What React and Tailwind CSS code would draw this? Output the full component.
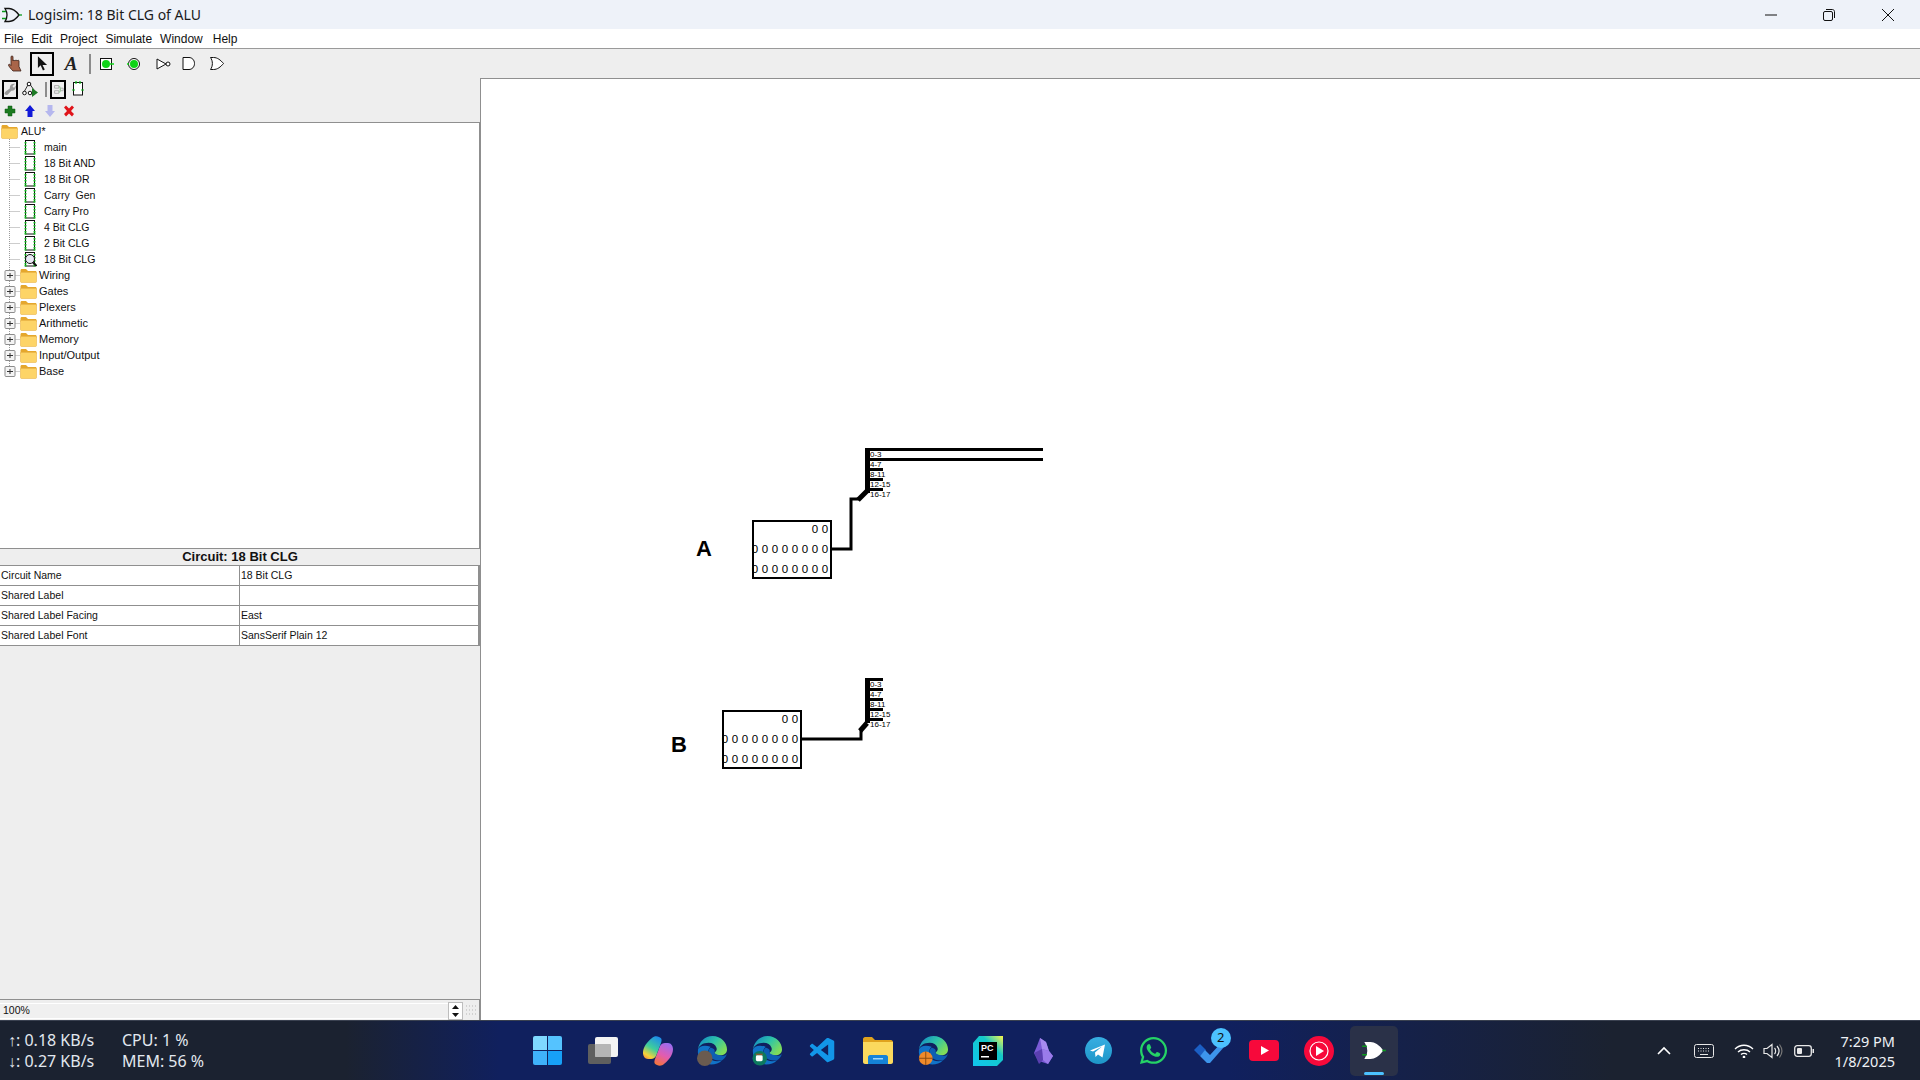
import { FaWhatsapp } from "react-icons/fa6";
import { VscVscode } from "react-icons/vsc";

const UI_FONT = "font-['Noto_Sans','Open_Sans',sans-serif]";
const TREE_FONT = "font-['Liberation_Sans',Arial,sans-serif]";

const circuits = ["main", "18 Bit AND", "18 Bit OR", "Carry  Gen", "Carry Pro", "4 Bit CLG", "2 Bit CLG", "18 Bit CLG"];
const libraries = ["Wiring", "Gates", "Plexers", "Arithmetic", "Memory", "Input/Output", "Base"];
const properties = [
    ["Circuit Name", "18 Bit CLG"],
    ["Shared Label", ""],
    ["Shared Label Facing", "East"],
    ["Shared Label Font", "SansSerif Plain 12"],
];
const splitLabels = ["0-3", "4-7", "8-11", "12-15", "16-17"];

const OrGate = ({ className, stroke = "#111", fill = "none" }) => (
    <svg viewBox="0 0 20 16" className={className}>
        <path d="M3 1.500h4c4 0 7 2.500 10 6.500-3 4-6 6.500-10 6.500H3c2.500-4 2.500-9 0-13Z" fill={fill} stroke={stroke} strokeWidth="1.300" />
        <path d="M0 4.500h4M0 11.500h4" stroke="#0a9a1c" strokeWidth="1.300" />
        <path d="M17 8h3" stroke="#0a9a1c" strokeWidth="1.300" />
    </svg>
);

const Folder = ({ className = "w-[17px] h-[15px]" }) => (
    <svg viewBox="0 0 17 15" className={className}>
        <path d="M0.500 2.500c0-1 .5-1.500 1.500-1.500h4l2 2h7.500c.5 0 1 .5 1 1v2H.5Z" fill="#e5a72c" />
        <path d="M0.500 4.500h16v9c0 .5-.5 1-1 1H1.500c-.5 0-1-.5-1-1Z" fill="#fdd467" stroke="#e9b64b" strokeWidth=".6" />
    </svg>
);

const CircuitIcon = ({ zoom }) => (
    <svg viewBox="0 0 14 15" className="w-[14px] h-[15px] shrink-0">
        <rect x="2.500" y="0.500" width="9" height="13.500" fill="none" stroke="#111" />
        {[2, 5, 8, 11, 13].map((y) => (
            <g key={y}>
                <rect x="1.500" y={y} width="2" height="1.500" fill="#12c21f" />
                <rect x="10.500" y={y} width="2" height="1.500" fill="#12c21f" />
            </g>
        ))}
        {zoom && (
            <g>
                <circle cx="7" cy="7" r="4.500" fill="#e9e9f5" stroke="#111" />
                <path d="M10 10.500l3.500 3.500" stroke="#111" strokeWidth="2" />
            </g>
        )}
    </svg>
);

const Guide = ({ last, expander }) => (
    <svg viewBox="0 0 20 16" className="w-5 h-4 shrink-0">
        <path d={last ? "M9.500 0v8.500" : "M9.500 0v16"} stroke="#9a9a9a" strokeDasharray="1 1" fill="none" />
        <path d="M9.500 8.500H20" stroke="#9a9a9a" strokeDasharray="1 1" fill="none" />
        {expander && (
            <g>
                <rect x="5" y="4" width="10" height="10" rx="1" fill="#f4f4f4" stroke="#8c8c8c" transform="translate(0 -.5)" />
                <path d="M7 8.500h6M10 6v5" stroke="#333" />
            </g>
        )}
    </svg>
);

const ToolBox = ({ className, children }) => (
    <div className={`flex items-center justify-center ${className}`}>{children}</div>
);

const TopToolbar = () => (
    <div className="h-[29px] shrink-0 bg-[#eeeeee] flex items-center">
        <ToolBox className="w-[30px] h-6 pl-[1px]">
            <svg viewBox="0 0 16 17" className="w-4 h-[17px]">
                <path d="M5 16c-2-2-4.500-5-4.500-6 0-1 1.500-1 2.500.5V2c0-1.500 2-1.500 2 0v4c0-1 1.500-1 1.500 0 0-1 1.500-1 1.500 0 0-1 1.500-1 1.500 0 0-1 1.500-1 1.500 0v5.500L13 16Z" fill="#a9654a" stroke="#3b2016" strokeWidth=".8" />
            </svg>
        </ToolBox>
        <ToolBox className="w-6 h-6 border-2 border-black">
            <svg viewBox="0 0 12 16" className="w-[11px] h-[15px]">
                <path d="M1 0v13l3-3 2.500 5.500 2-1L6 9.500h5Z" fill="#111" />
            </svg>
        </ToolBox>
        <ToolBox className="w-6 h-6 ml-[5px]">
            <span className="font-['Liberation_Serif',serif] italic font-bold text-[19px] text-[#222] leading-none">A</span>
        </ToolBox>
        <div className="w-[2px] h-5 ml-[6px] bg-[#8c8c8c]" />
        <ToolBox className="w-5 h-5 ml-[6px]">
            <svg viewBox="0 0 14 12" className="w-[14px] h-3">
                <rect x=".5" y=".5" width="11" height="11" fill="#fff" stroke="#111" />
                <circle cx="6" cy="6" r="4" fill="#0fd317" />
                <path d="M10 6h4" stroke="#0fd317" strokeWidth="1.500" />
            </svg>
        </ToolBox>
        <ToolBox className="w-5 h-5 ml-[7px]">
            <svg viewBox="0 0 14 12" className="w-[14px] h-3">
                <circle cx="7" cy="6" r="5.500" fill="#fff" stroke="#111" />
                <circle cx="7" cy="6" r="4" fill="#0fd317" />
                <path d="M0 6h2" stroke="#0fd317" strokeWidth="1.500" />
            </svg>
        </ToolBox>
        <ToolBox className="w-5 h-5 ml-[9px]">
            <svg viewBox="0 0 15 12" className="w-[15px] h-3">
                <path d="M1 1l9 5-9 5Z" fill="#fff" stroke="#111" />
                <circle cx="12" cy="6" r="2" fill="#fff" stroke="#111" />
            </svg>
        </ToolBox>
        <ToolBox className="w-5 h-5 ml-[6px]">
            <svg viewBox="0 0 14 13" className="w-[14px] h-[13px]">
                <path d="M1 .5h6c3 0 5.500 2.500 5.500 6s-2.500 6-5.500 6H1Z" fill="#fff" stroke="#111" />
            </svg>
        </ToolBox>
        <ToolBox className="w-5 h-5 ml-2">
            <svg viewBox="0 0 14 13" className="w-[14px] h-[13px]">
                <path d="M.5.5h3c4 0 7 2.500 10 6-3 3.500-6 6-10 6h-3c2.500-3.500 2.500-8.500 0-12Z" fill="#fff" stroke="#111" />
            </svg>
        </ToolBox>
    </div>
);

const SideToolbars = () => (
    <div className="bg-[#eeeeee]">
        <div className="h-[22px] flex items-center pl-[2px]">
            <ToolBox className="w-4 h-[19px] border-2 border-black">
                <svg viewBox="0 0 14 14" className="w-3 h-3">
                    <path d="M1 13c-1-1 0-2 1-3l5-4c-1-3 2-6 6-5L10 3.500l.5 1.500 1.500.5L13.500 3c1 4-2 6.500-5 6l-4 4.500c-1 1-2.500.5-3.500-.5Z" fill="#9a9a9a" />
                </svg>
            </ToolBox>
            <ToolBox className="w-4 h-4 ml-1">
                <svg viewBox="0 0 16 16" className="w-4 h-4">
                    <path d="M7 2L2 11M7 2l5 7" stroke="#333" fill="none" />
                    <circle cx="7" cy="3" r="1.800" fill="#fff" stroke="#111" />
                    <circle cx="2.500" cy="12" r="1.800" fill="#fff" stroke="#111" />
                    <circle cx="8" cy="12" r="1.800" fill="#fff" stroke="#111" />
                    <path d="M10 7l6 4.500-6 4.500Z" fill="#1d7a25" />
                </svg>
            </ToolBox>
            <div className="w-[2px] h-[15px] ml-[7px] bg-[#8c8c8c]" />
            <ToolBox className="w-4 h-[19px] ml-[3px] border-2 border-black">
                <svg viewBox="0 0 14 14" className="w-3 h-[14px]">
                    <path d="M3 3h5v3H3zM3 9h5v3H3zM10 6h3v3h-3z" fill="none" stroke="#a6a6a6" />
                    <path d="M8 4.500h1.500v6H8M9.500 7.500H10" fill="none" stroke="#8cc98f" />
                </svg>
            </ToolBox>
            <ToolBox className="w-4 h-4 ml-1">
                <svg viewBox="0 0 16 16" className="w-4 h-4">
                    <rect x="3.500" y="1.500" width="9" height="12.500" fill="#fff" stroke="#111" />
                    <path d="M2 9h3M11 9h3M6 0v3M10 0v3" stroke="#12c21f" strokeWidth="1.200" />
                </svg>
            </ToolBox>
        </div>
        <div className="h-[22px] flex items-center pl-[2px]">
            <svg viewBox="0 0 16 16" className="w-4 h-4">
                <path d="M6 3h4v3h3v4h-3v3H6v-3H3V6h3Z" fill="#1b7a1f" stroke="#0b5a10" strokeWidth=".5" />
            </svg>
            <svg viewBox="0 0 16 16" className="w-4 h-4 ml-1">
                <path d="M8 2l5 6h-2.500v6h-5V8H3Z" fill="#1018d8" />
            </svg>
            <svg viewBox="0 0 16 16" className="w-4 h-4 ml-1">
                <path d="M5.500 2h5v6H13l-5 6-5-6h2.500Z" fill="#b5b7ee" />
            </svg>
            <svg viewBox="0 0 16 16" className="w-4 h-4 ml-[3px]">
                <path d="M3 4.500L5 2.500l3 3 3-3 2 2-3 3.500 3 3-2 2.500-3-3-3 3-2-2.500 3-3Z" fill="#e0141a" />
            </svg>
        </div>
    </div>
);

const ProjectTree = () => (
    <div className={`h-[427px] bg-white border-y border-r border-[#8f8f8f] text-[10.5px] leading-4 text-[#111] ${TREE_FONT}`}>
        <div className="h-4 flex items-center pl-[1px]">
            <Folder />
            <span className="ml-[3px]">ALU*</span>
        </div>
        {circuits.map((name, i) => (
            <div key={name} className="h-4 flex items-center">
                <Guide />
                <div className="w-[3px]" />
                <CircuitIcon zoom={i === circuits.length - 1} />
                <span className="ml-[7px] whitespace-pre">{name}</span>
            </div>
        ))}
        {libraries.map((name, i) => (
            <div key={name} className="h-4 flex items-center">
                <Guide expander last={i === libraries.length - 1} />
                <Folder />
                <span className="ml-[2px] text-[11px]">{name}</span>
            </div>
        ))}
    </div>
);

const PropertyTable = () => (
    <div className={`text-[10.5px] text-[#111] ${TREE_FONT}`}>
        <div className="h-4 flex items-center justify-center font-bold text-[13px]">Circuit: 18 Bit CLG</div>
        <div className="border-t border-[#8f8f8f] border-r-2 border-r-[#8f8f8f]">
            {properties.map(([label, value]) => (
                <div key={label} className="h-5 flex bg-white border-b border-[#8f8f8f]">
                    <div className="w-[240px] pl-[1px] flex items-center border-r border-[#8f8f8f]">{label}</div>
                    <div className="flex-1 pl-[1px] flex items-center">{value}</div>
                </div>
            ))}
        </div>
    </div>
);

const ZoomBar = () => (
    <div className={`h-[21px] pt-[1px] flex items-center border-t border-r border-[#8f8f8f] text-[10.5px] text-[#111] ${TREE_FONT}`}>
        <div className="w-[448px] h-[16px] pl-[3px] flex items-center bg-[#f0f0f0] border-y border-white">100%</div>
        <div className="w-[15px] h-[18px] flex flex-col border border-[#bdbdbd] bg-white">
            <svg viewBox="0 0 13 8" className="w-[13px] h-2"><path d="M3 6l3.500-4L10 6Z" fill="#111" /></svg>
            <svg viewBox="0 0 13 8" className="w-[13px] h-2"><path d="M3 2l3.500 4L10 2Z" fill="#111" /></svg>
        </div>
        <svg viewBox="0 0 14 14" className="w-[14px] h-[14px] ml-[1px]">
            <path d="M2 2h10M2 6h10M2 10h10" stroke="#b5b5b5" strokeDasharray="1 2" />
        </svg>
    </div>
);

const Splitter = ({ top, wideFirst }) => (
    <g>
        <rect x="865" y={top} width="5" height="45" fill="#000" />
        {splitLabels.map((label, i) => (
            <g key={label}>
                <rect x="868" y={top + i * 10} width={wideFirst && i < 2 ? 175 : 15} height="3" fill="#000" />
                <text x="870" y={top + 8.500 + i * 10} fontSize="8" fontFamily="Liberation Sans" fill="#000">{label}</text>
            </g>
        ))}
    </g>
);

const Pin = ({ x, y }) => {
    const rows = [
        [y + 9, 2],
        [y + 29, 8],
        [y + 49, 8],
    ];
    return (
        <g>
            <rect x={x + 1} y={y + 1} width="78" height="57" fill="#fff" stroke="#000" strokeWidth="2" />
            {rows.map(([cy, count]) =>
                Array.from({ length: count }).map((_, i) => (
                    <text key={`${cy}-${i}`} x={x + 73 - i * 10} y={cy + 4} fontSize="11.500" textAnchor="middle" fontFamily="Liberation Sans" fill="#000">0</text>
                )),
            )}
        </g>
    );
};

const Canvas = () => (
    <div className="flex-1 bg-white border-l border-t border-[#8f8f8f]">
        <svg viewBox="481 79 1439 941" className="w-full h-full">
            <text x="696" y="556" fontSize="22" fontWeight="700" fontFamily="Liberation Sans" fill="#000">A</text>
            <text x="671" y="752" fontSize="22" fontWeight="700" fontFamily="Liberation Sans" fill="#000">B</text>
            <Pin x={752} y={520} />
            <path d="M832 549h19v-50h8" fill="none" stroke="#000" strokeWidth="3" />
            <path d="M858 500l9-9" fill="none" stroke="#000" strokeWidth="5" />
            <Splitter top={448} wideFirst />
            <Pin x={722} y={710} />
            <path d="M802 739h59v-9" fill="none" stroke="#000" strokeWidth="3" />
            <path d="M860 731l7-8" fill="none" stroke="#000" strokeWidth="5" />
            <Splitter top={678} />
        </svg>
    </div>
);

const Edge = ({ badge }) => (
    <svg viewBox="0 0 32 32" className="w-[31px] h-[31px]">
        <defs>
            <linearGradient id="edgeTop" x1="0" y1="0" x2="1" y2="0.6">
                <stop offset="0" stopColor="#0f7fc9" />
                <stop offset=".55" stopColor="#2ec4a8" />
                <stop offset="1" stopColor="#7fdc5a" />
            </linearGradient>
        </defs>
        <path d="M1 15C2 7 8 1 16 1c9 0 15 7 15 14 0 4-3 6-7 6-3 0-6-1-6-3 2-1 3-3 2-5-1-3-4-5-8-5C6 8 2 11 1 15Z" fill="url(#edgeTop)" />
        <path d="M1 15c-1 8 4 14 10 15 5 1 11 0 15-4-5 2-10 1-13-2-3-4-2-9 1-12-6-2-12-1-13 3Z" fill="#1173c8" />
        <path d="M14 13c-3 3-3 7 0 10 3 3 8 4 12 3 3-2 4-4 5-7-1 2-4 3-7 2-4-1-6-2-6-3 1-2 0-4-4-5Z" fill="#0d5fb4" />
        {badge}
    </svg>
);

const TaskIcon = ({ children }) => (
    <div className="w-[55.1px] h-[60px] flex items-center justify-center">{children}</div>
);

const Taskbar = () => (
    <div className="h-[60px] shrink-0 flex items-center border-t border-[#3a4150] bg-[linear-gradient(90deg,#1b2230_0%,#1b2230_18%,#10205e_26%,#10205e_64%,#1b2230_84%,#1b2230_100%)]">
        <div className={`w-[520px] shrink-0 flex pl-2 text-[16px] leading-[21px] text-[#e2e8ef] ${UI_FONT}`}>
            <div className="w-[114px]">
                <div><span className={TREE_FONT}>↑</span>: 0.18 KB/s</div>
                <div><span className={TREE_FONT}>↓</span>: 0.27 KB/s</div>
            </div>
            <div>
                <div>CPU: 1 %</div>
                <div>MEM: 56 %</div>
            </div>
        </div>
        <div className="flex items-center">
            <TaskIcon>
                <div className="w-[29px] h-[29px] grid grid-cols-2 grid-rows-2 gap-[1px]">
                    <div className="rounded-tl-[2px] bg-[#7fd8ff]" />
                    <div className="rounded-tr-[2px] bg-[#55c3ff]" />
                    <div className="rounded-bl-[2px] bg-[#3fb2fb]" />
                    <div className="rounded-br-[2px] bg-[#17a0f7]" />
                </div>
            </TaskIcon>
            <TaskIcon>
                <svg viewBox="0 0 30 30" className="w-[30px] h-[30px]">
                    <rect x="0" y="8" width="23" height="20" rx="2" fill="#5f5f5f" />
                    <rect x="7" y="1" width="23" height="20" rx="2" fill="#f3f3f3" />
                    <rect x="7" y="8" width="16" height="13" rx="1" fill="#b5b5b5" />
                </svg>
            </TaskIcon>
            <TaskIcon>
                <svg viewBox="0 0 30 30" className="w-[30px] h-[30px]">
                    <defs>
                        <linearGradient id="copilotA" x1="0.700" y1="0" x2="0.200" y2="1">
                            <stop offset="0" stopColor="#1f8fe8" />
                            <stop offset=".5" stopColor="#3fcf9a" />
                            <stop offset=".85" stopColor="#f6d23a" />
                            <stop offset="1" stopColor="#f59a3c" />
                        </linearGradient>
                        <linearGradient id="copilotB" x1="0.700" y1="0" x2="0.300" y2="1">
                            <stop offset="0" stopColor="#9b6cf0" />
                            <stop offset=".55" stopColor="#e25cb0" />
                            <stop offset="1" stopColor="#f4743e" />
                        </linearGradient>
                    </defs>
                    <path d="M21 28c-2 2-5 2-7 1-3-1-3-3-2-6l5-13c1-2 3-3 5-3h3c3 0 5 3 5 6 0 6-4 11-9 15Z" fill="url(#copilotB)" />
                    <path d="M9 2c2-2 5-2 7-1 3 1 3 3 2 6l-5 13c-1 2-3 3-5 3H5c-3 0-5-3-5-6C0 11 4 6 9 2Z" fill="url(#copilotA)" />
                </svg>
            </TaskIcon>
            <TaskIcon>
                <Edge badge={<circle cx="8" cy="24" r="8" fill="#6a5b50" />} />
            </TaskIcon>
            <TaskIcon>
                <Edge
                    badge={
                        <g>
                            <circle cx="8" cy="24" r="7.500" fill="#0d7a5f" />
                            <rect x="4" y="21" width="7" height="6" rx="1.500" fill="#fff" />
                            <path d="M4 20h7" stroke="#8a5a33" strokeWidth="1.500" />
                        </g>
                    }
                />
            </TaskIcon>
            <TaskIcon>
                <VscVscode className="w-[30px] h-[30px] text-[#1296e8]" />
            </TaskIcon>
            <TaskIcon>
                <svg viewBox="0 0 30 27" className="w-[30px] h-[27px]">
                    <path d="M0 2c0-1 1-2 2-2h7l3 3h16c1 0 2 1 2 2v3H0Z" fill="#e0a31e" />
                    <path d="M0 5h30v20c0 1-1 2-2 2H2c-1 0-2-1-2-2Z" fill="#fbd95e" />
                    <path d="M5 20c0-1 1-2 2-2h16c1 0 2 1 2 2v7H5Z" fill="#1583d8" />
                    <rect x="10" y="21" width="10" height="1.500" fill="#9fd6fa" />
                </svg>
            </TaskIcon>
            <TaskIcon>
                <Edge
                    badge={
                        <g>
                            <circle cx="8" cy="24" r="7" fill="#f08a2b" />
                            <path d="M1 24h14M8 17v14" stroke="#8a4a12" />
                        </g>
                    }
                />
            </TaskIcon>
            <TaskIcon>
                <svg viewBox="0 0 30 30" className="w-[30px] h-[30px]">
                    <defs>
                        <linearGradient id="pcGrad" x1="0" y1="1" x2="1" y2="0">
                            <stop offset="0" stopColor="#10c6ef" />
                            <stop offset=".65" stopColor="#14c8c8" />
                            <stop offset="1" stopColor="#fcf84a" />
                        </linearGradient>
                    </defs>
                    <path d="M6 0h24v24l-6 6H0V7Z" fill="url(#pcGrad)" />
                    <rect x="6" y="6" width="18" height="18" fill="#000" />
                    <text x="8" y="15" fontSize="9" fontWeight="700" fontFamily="Liberation Sans" fill="#fff">PC</text>
                    <rect x="8" y="20" width="8" height="1.500" fill="#fff" />
                </svg>
            </TaskIcon>
            <TaskIcon>
                <svg viewBox="0 0 22 28" className="w-[22px] h-7">
                    <path d="M8 1l6 4 3 9 4 5-5 8-9-3-5-8 3-7Z" fill="#7a5bd6" />
                    <path d="M8 1l6 4 3 9-7-2Z" fill="#a78bf0" />
                    <path d="M10 12l7 2 4 5-5 8-5-4Z" fill="#9a7bea" />
                    <path d="M2 16l8-4 1 11-4 4Z" fill="#5a3fb0" />
                </svg>
            </TaskIcon>
            <TaskIcon>
                <svg viewBox="0 0 27 27" className="w-[27px] h-[27px]">
                    <defs>
                        <linearGradient id="tgGrad" x1="0" y1="0" x2="0" y2="1">
                            <stop offset="0" stopColor="#37aee2" />
                            <stop offset="1" stopColor="#1e96c8" />
                        </linearGradient>
                    </defs>
                    <circle cx="13.500" cy="13.500" r="13.500" fill="url(#tgGrad)" />
                    <path d="M5 13.500l15-6-2.500 13-4.500-3-2.500 2.500-.5-4.500 7-6-9 5Z" fill="#fff" />
                </svg>
            </TaskIcon>
            <TaskIcon>
                <FaWhatsapp className="w-[31px] h-[31px] text-[#25d366]" />
            </TaskIcon>
            <TaskIcon>
                <div className="relative">
                    <svg viewBox="0 0 30 24" className="w-[30px] h-6">
                        <path d="M0 11l6-6 6 6-6 6Z" fill="#1b5fc4" />
                        <path d="M6 17l5-6 5 5L27 4l3 4-14 16h-3Z" fill="#3d95ec" />
                    </svg>
                    <div className={`absolute -top-[11px] left-[17px] w-5 h-5 rounded-full bg-[#4cc2ff] flex items-center justify-center text-[13px] text-[#111] ${UI_FONT}`}>2</div>
                </div>
            </TaskIcon>
            <TaskIcon>
                <svg viewBox="0 0 30 21" className="w-[30px] h-[21px]">
                    <rect width="30" height="21" rx="4" fill="#f7093b" />
                    <path d="M12 6l8 4.500-8 4.500Z" fill="#fff" />
                </svg>
            </TaskIcon>
            <TaskIcon>
                <svg viewBox="0 0 30 30" className="w-[30px] h-[30px]">
                    <circle cx="15" cy="15" r="15" fill="#f7093b" />
                    <circle cx="15" cy="15" r="9" fill="none" stroke="#fff" strokeWidth="1.200" />
                    <path d="M12 10l8 5-8 5Z" fill="#fff" />
                </svg>
            </TaskIcon>
            <div className="w-[55px] h-[60px] flex items-center justify-center">
                <div className="relative w-[48px] h-[50px] rounded-[5px] bg-[#2a3148] flex items-center justify-center">
                    <OrGate className="w-[24px] h-[19px]" stroke="#fff" fill="#fff" />
                    <div className="absolute bottom-[1px] left-[14px] w-5 h-[3px] rounded-full bg-[#4cc2ff]" />
                </div>
            </div>
        </div>
        <div className={`ml-auto pr-[25px] flex items-center text-[#eef1f5] ${UI_FONT}`}>
            <svg viewBox="0 0 16 16" className="w-4 h-4"><path d="M2 11l6-6 6 6" fill="none" stroke="#fff" strokeWidth="1.600" /></svg>
            <svg viewBox="0 0 20 14" className="w-5 h-[14px] ml-[22px]" fill="none" stroke="#e8e8e8">
                <rect x=".5" y=".5" width="19" height="13" rx="2" />
                <path d="M4 4.500h12M4 7h12" strokeDasharray="1 1.500" />
                <path d="M6 10.500h8" />
            </svg>
            <svg viewBox="0 0 20 14" className="w-5 h-[14px] ml-5" fill="none" stroke="#fff" strokeWidth="1.300">
                <path d="M1 5c5-5 13-5 18 0M4 8c3-3 9-3 12 0M7 10.500c1.500-1.500 4.500-1.500 6 0" />
                <circle cx="10" cy="13" r=".7" fill="#fff" />
            </svg>
            <svg viewBox="0 0 20 16" className="w-5 h-4 ml-[9px]" fill="none" stroke="#e8e8e8" strokeWidth="1.200">
                <path d="M1 5.500h3l5-4v13l-5-4H1Z" />
                <path d="M11.500 5c1.500 1.500 1.500 4.500 0 6M14 3c2.500 3 2.500 7 0 10" />
                <path d="M16.500 1.500c3 4 3 9 0 13" stroke="#777" />
            </svg>
            <svg viewBox="0 0 20 12" className="w-5 h-3 ml-[11px]" fill="none">
                <rect x=".7" y=".7" width="16.600" height="10.600" rx="2.500" stroke="#e8e8e8" strokeWidth="1.300" />
                <rect x="3" y="3" width="5" height="6" rx="1" fill="#e8e8e8" />
                <rect x="18.500" y="4" width="1.500" height="4" fill="#e8e8e8" />
            </svg>
            <div className="w-[81px] text-right text-[14.5px] leading-5">
                <div>7:29 PM</div>
                <div>1/8/2025</div>
            </div>
        </div>
    </div>
);

export default function App() {
    return (
        <div className="w-[1920px] h-screen flex flex-col overflow-hidden bg-white">
            <div className={`h-[29px] shrink-0 flex items-center bg-[#eef2f9] text-[14px] text-[#1a1a1a] ${UI_FONT}`}>
                <OrGate className="w-[20px] h-4 ml-[2px]" />
                <span className="ml-[6px]">Logisim: 18 Bit CLG of ALU</span>
                <div className="ml-auto flex items-center">
                    <svg viewBox="0 0 12 12" className="w-3 h-3 mr-[46px]"><path d="M0 6h12" stroke="#111" /></svg>
                    <svg viewBox="0 0 12 12" className="w-3 h-3 mr-[47px]" fill="none" stroke="#111">
                        <rect x=".5" y="2.500" width="9" height="9" rx="1.500" />
                        <path d="M3 .5h6.500c1 0 2 1 2 2V9" />
                    </svg>
                    <svg viewBox="0 0 12 12" className="w-3 h-3 mr-[26px]"><path d="M0 0l12 12M12 0L0 12" stroke="#111" /></svg>
                </div>
            </div>
            <div className={`h-5 shrink-0 flex items-center pl-1 pt-[1px] bg-white border-b border-[#9a9a9a] text-[12px] text-[#111] ${TREE_FONT}`}>
                <span>File</span>
                <span className="ml-2">Edit</span>
                <span className="ml-2">Project</span>
                <span className="ml-2">Simulate</span>
                <span className="ml-2">Window</span>
                <span className="ml-[10px]">Help</span>
            </div>
            <TopToolbar />
            <div className="flex-1 min-h-0 flex">
                <div className="w-[480px] shrink-0 flex flex-col bg-[#eeeeee]">
                    <SideToolbars />
                    <ProjectTree />
                    <PropertyTable />
                    <div className="flex-1" />
                    <ZoomBar />
                </div>
                <Canvas />
            </div>
            <Taskbar />
        </div>
    );
}
